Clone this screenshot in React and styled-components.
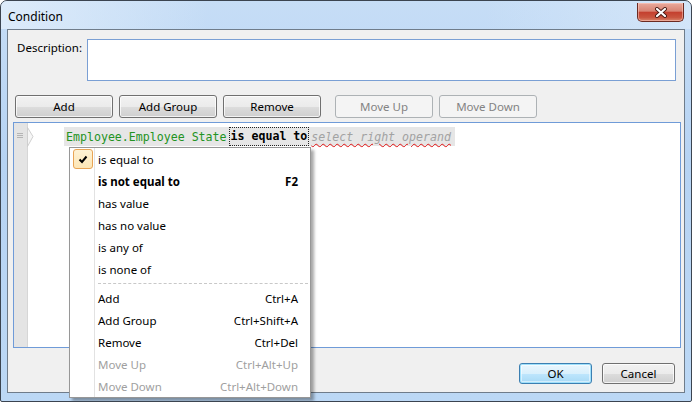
import styled, { createGlobalStyle, css } from "styled-components";

const GlobalStyle = createGlobalStyle`
  html, body {
    margin: 0;
    padding: 0;
    background: #ffffff;
  }
  body {
    font-family: "Noto Sans", "Open Sans", sans-serif;
    font-size: 12px;
    color: #000;
  }
`;

const uiFont = `"Noto Sans", "Open Sans", sans-serif`;
const codeFont = `"DejaVu Sans Mono", "Liberation Mono", monospace`;

const operators = [
  { label: "is equal to", checked: true },
  { label: "is not equal to", shortcut: "F2", bold: true },
  { label: "has value" },
  { label: "has no value" },
  { label: "is any of" },
  { label: "is none of" },
];

const commands = [
  { label: "Add", shortcut: "Ctrl+A" },
  { label: "Add Group", shortcut: "Ctrl+Shift+A" },
  { label: "Remove", shortcut: "Ctrl+Del" },
  { label: "Move Up", shortcut: "Ctrl+Alt+Up", disabled: true },
  { label: "Move Down", shortcut: "Ctrl+Alt+Down", disabled: true },
];

export default function App() {
  return (
    <>
      <GlobalStyle />
      <Window>
        <TitleBar>
          <Title>Condition</Title>
          <CloseButton>
            <svg width="14" height="11" viewBox="0 0 14 11">
              <path
                d="M3 2 L11 9 M11 2 L3 9"
                stroke="#4a1a14"
                strokeWidth="4"
                strokeLinecap="round"
              />
              <path
                d="M3 2 L11 9 M11 2 L3 9"
                stroke="#ffffff"
                strokeWidth="2.2"
                strokeLinecap="round"
              />
            </svg>
          </CloseButton>
        </TitleBar>
        <Client>
          <DescriptionRow>
            <Label>Description:</Label>
            <TextBox />
          </DescriptionRow>
          <ButtonRow>
            <Button>Add</Button>
            <Button>Add Group</Button>
            <Button>Remove</Button>
            <Button disabled $gapBefore>
              Move Up
            </Button>
            <Button disabled>Move Down</Button>
          </ButtonRow>
          <Editor>
            <Gutter>
              <svg width="6" height="6" viewBox="0 0 6 6">
                <path d="M0 0.5 H6 M0 2.5 H6 M0 4.5 H6" stroke="#b4b4b4" strokeWidth="1" />
              </svg>
            </Gutter>
            <GutterTab width="7" height="20" viewBox="0 0 7 20">
              <path d="M0.5 0 L0.5 20 M0.5 0.5 L6 9.5 L0.5 19.5" fill="#f6f6f6" stroke="#cfcfcf" strokeWidth="1" />
            </GutterTab>
            <CodeLine>
              <Field>Employee.Employee State</Field>
              <Operator>is equal to</Operator>
              <Placeholder>select right operand</Placeholder>
            </CodeLine>
            <Menu>
              {operators.map((item) => (
                <MenuItem key={item.label} $bold={item.bold}>
                  <MenuIcon>
                    {item.checked && (
                      <CheckBox>
                        <svg width="10" height="9" viewBox="0 0 10 9">
                          <path
                            d="M1.5 4.5 L4 7 L8.5 1.5"
                            fill="none"
                            stroke="#000"
                            strokeWidth="2"
                          />
                        </svg>
                      </CheckBox>
                    )}
                  </MenuIcon>
                  <MenuLabel>{item.label}</MenuLabel>
                  <Shortcut>{item.shortcut}</Shortcut>
                </MenuItem>
              ))}
              <MenuSeparator>
                <MenuIcon />
                <DashedLine />
              </MenuSeparator>
              {commands.map((item) => (
                <MenuItem key={item.label} $disabled={item.disabled}>
                  <MenuIcon />
                  <MenuLabel>{item.label}</MenuLabel>
                  <Shortcut>{item.shortcut}</Shortcut>
                </MenuItem>
              ))}
            </Menu>
          </Editor>
          <Footer>
            <Button $default $small>
              OK
            </Button>
            <Button $small>Cancel</Button>
          </Footer>
        </Client>
      </Window>
    </>
  );
}

const Window = styled.div`
  box-sizing: border-box;
  width: 692px;
  height: 402px;
  display: flex;
  flex-direction: column;
  border: 1px solid #3b4450;
  border-radius: 7px 7px 2px 2px;
  background: linear-gradient(180deg, #c6ddf6 0%, #b6d3f3 40%, #bcd8f5 100%);
  overflow: hidden;
`;

const TitleBar = styled.div`
  height: 28px;
  flex: none;
  display: flex;
  align-items: flex-start;
  justify-content: space-between;
  padding: 0 7px 0 7px;
  background: linear-gradient(90deg, rgba(225, 238, 251, 0.85) 0%, rgba(225, 238, 251, 0) 30%, rgba(225, 238, 251, 0) 70%, rgba(225, 238, 251, 0.5) 100%);
`;

const Title = styled.div`
  font-family: ${uiFont};
  font-size: 12px;
  line-height: 16px;
  margin-top: 8px;
  color: #000;
`;

const CloseButton = styled.div`
  box-sizing: border-box;
  width: 47px;
  height: 19px;
  margin-top: 2px;
  display: flex;
  align-items: center;
  justify-content: center;
  border: 1px solid #6b2a22;
  border-top: none;
  border-radius: 0 0 5px 5px;
  background: linear-gradient(
    180deg,
    #e9a99c 0%,
    #d88474 45%,
    #c4402f 52%,
    #c9553f 80%,
    #d9866d 100%
  );
  box-shadow: inset 0 0 0 1px rgba(255, 210, 200, 0.5);
`;

const Client = styled.div`
  flex: 1;
  display: flex;
  flex-direction: column;
  margin: 0 6px 8px 6px;
  border: 1px solid #6f7c8a;
  background: #f0f0f0;
`;

const DescriptionRow = styled.div`
  display: flex;
  padding: 9px 8px 0 9px;
`;

const Label = styled.div`
  width: 70px;
  flex: none;
  font-family: ${uiFont};
  font-size: 11.5px;
  line-height: 16px;
  padding-top: 1px;
`;

const TextBox = styled.div`
  flex: 1;
  height: 40px;
  border: 1px solid #7a9fd4;
  background: #ffffff;
`;

const ButtonRow = styled.div`
  display: flex;
  gap: 6px;
  margin-top: 14px;
  padding-left: 7px;
`;

const Button = styled.button`
  box-sizing: border-box;
  width: ${({ $small }) => ($small ? "73px" : "98px")};
  height: ${({ $small }) => ($small ? "21px" : "23px")};
  margin-left: ${({ $gapBefore }) => ($gapBefore ? "8px" : "0")};
  padding: 0;
  font-family: ${uiFont};
  font-size: 11.5px;
  color: #000;
  border: 1px solid #707070;
  border-radius: 3px;
  background: linear-gradient(180deg, #f2f2f2 0%, #ebebeb 50%, #dddddd 51%, #cfcfcf 100%);
  box-shadow: inset 0 0 0 1px rgba(255, 255, 255, 0.75);
  &:disabled {
    color: #838383;
    border-color: #adb2b5;
    background: #f4f4f4;
    box-shadow: none;
  }
  ${({ $default }) =>
    $default &&
    css`
      border-color: #3c7fb1;
      background: linear-gradient(180deg, #eaf6fd 0%, #d9f0fc 50%, #bee6fd 51%, #a7d9f5 100%);
      box-shadow: inset 0 0 0 1px #9fe0fb, inset 0 0 0 2px rgba(255, 255, 255, 0.5);
    `}
`;

const Editor = styled.div`
  position: relative;
  display: flex;
  align-items: flex-start;
  height: 224px;
  margin: 4px 3px 0 5px;
  border: 1px solid #6f9bd8;
  background: #ffffff;
`;

const Gutter = styled.div`
  box-sizing: border-box;
  width: 14px;
  height: 100%;
  flex: none;
  display: flex;
  justify-content: center;
  padding-top: 10px;
  padding-right: 1px;
  background: #e4e4e4;
  border-right: 1px solid #d6d6d6;
`;

const GutterTab = styled.svg`
  flex: none;
  margin-top: 4px;
  margin-left: -1px;
`;

const CodeLine = styled.div`
  display: flex;
  align-items: center;
  height: 19px;
  margin-top: 4px;
  margin-left: 30px;
  padding: 0 4px 0 2px;
  background: #e6e6e6;
  font-family: ${codeFont};
  font-size: 11.6px;
  white-space: pre;
`;

const Field = styled.span`
  color: #239323;
  margin-right: 2px;
`;

const Operator = styled.span`
  box-sizing: border-box;
  height: 19px;
  line-height: 17px;
  padding: 0 1px;
  border: 1px dotted #222;
  font-weight: bold;
  color: #000;
  margin-right: 2px;
`;

const Placeholder = styled.span`
  color: #a2a2a2;
  font-style: italic;
  text-decoration: underline wavy #e01010;
  text-decoration-thickness: 1px;
  text-underline-offset: 2px;
`;

const Menu = styled.div`
  position: absolute;
  left: 55px;
  top: 24px;
  width: 240px;
  display: flex;
  flex-direction: column;
  border: 1px solid #979797;
  background: #ffffff;
  box-shadow: 3px 3px 3px rgba(0, 0, 0, 0.35);
  font-family: ${uiFont};
  font-size: 11.5px;
  z-index: 2;
`;

const MenuItem = styled.div`
  display: flex;
  align-items: center;
  height: 22px;
  padding-right: 12px;
  font-weight: ${({ $bold }) => ($bold ? "bold" : "normal")};
  color: ${({ $disabled }) => ($disabled ? "#a0a0a0" : "#000")};
`;

const MenuIcon = styled.div`
  box-sizing: border-box;
  width: 25px;
  height: 100%;
  flex: none;
  display: flex;
  align-items: center;
  padding-left: 3px;
  border-right: 1px solid #e2e2e2;
`;

const CheckBox = styled.div`
  box-sizing: border-box;
  width: 20px;
  height: 20px;
  display: flex;
  align-items: center;
  justify-content: center;
  border: 1px solid #e8a455;
  border-radius: 3px;
  background: linear-gradient(180deg, #fef2d4 0%, #fde6b6 100%);
`;

const MenuLabel = styled.span`
  flex: 1;
  padding-left: 3px;
`;

const Shortcut = styled.span`
  text-align: right;
`;

const MenuSeparator = styled.div`
  display: flex;
  align-items: center;
  height: 7px;
`;

const DashedLine = styled.div`
  flex: 1;
  margin: 0 2px 0 3px;
  border-top: 1px dashed #c8c8c8;
`;

const Footer = styled.div`
  display: flex;
  justify-content: flex-end;
  gap: 10px;
  margin-top: 15px;
  padding-right: 9px;
`;
